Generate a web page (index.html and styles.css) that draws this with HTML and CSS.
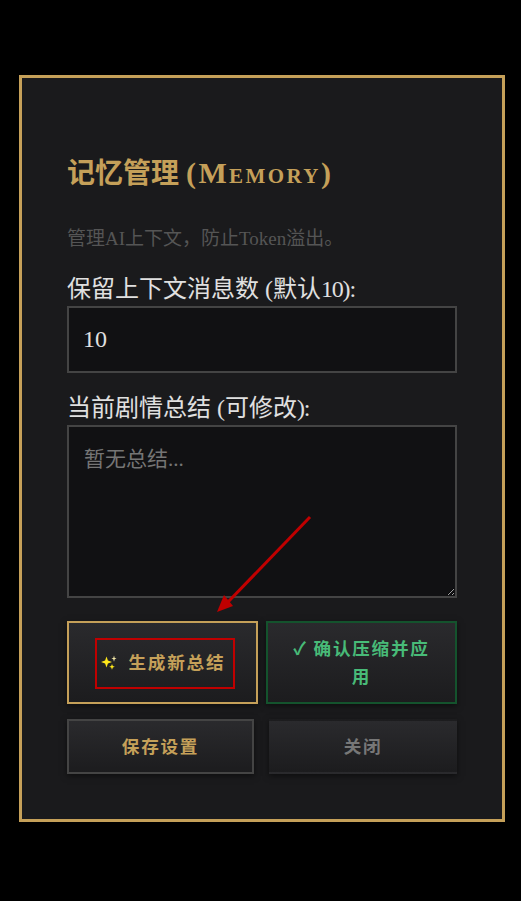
FILE: index.html
```html
<!DOCTYPE html>
<html lang="zh">
<head>
    <meta charset="UTF-8">
    <title>记忆管理</title>
    <link rel="stylesheet" href="styles.css">
</head>
<body>
    <div class="modal">
        <h2 class="modal-title">记忆管理 <span class="title-latin">(Memory)</span></h2>
        <p class="modal-desc">管理AI上下文，防止Token溢出。</p>

        <label class="field-label" for="keep">保留上下文消息数 (默认<span class="tight">10):</span></label>
        <input class="field-input" id="keep" type="text" value="10">

        <label class="field-label summary-label" for="summary">当前剧情总结 (可修改<span class="tight">):</span></label>
        <textarea class="field-area" id="summary" placeholder="暂无总结..."></textarea>

        <div class="btn-row first-row">
            <button class="btn btn-gold">
                <svg class="sparkle" width="18" height="18" viewBox="0 0 18 18">
                    <path d="M6.5 3.5 L7.9 7.6 L12 9 L7.9 10.4 L6.5 14.5 L5.1 10.4 L1 9 L5.1 7.6 Z" fill="#ffe81a"/>
                    <path d="M14 2.5 L14.7 4.9 L16.6 5.6 L14.7 6.3 L14 8.7 L13.3 6.3 L11.4 5.6 L13.3 4.9 Z" fill="#f3e7a8"/>
                    <path d="M12 11 L12.8 13 L14.8 13.8 L12.8 14.6 L12 16.8 L11.2 14.6 L9.2 13.8 L11.2 13 Z" fill="#ffe81a"/>
                </svg>
                生成新总结
            </button>
            <button class="btn btn-green">✓ 确认压缩并应用</button>
        </div>
        <div class="btn-row second-row">
            <button class="btn btn-save">保存设置</button>
            <button class="btn btn-close">关闭</button>
        </div>
    </div>

    <!-- annotation drawn over the page -->
    <div class="note-box"></div>
    <svg class="note-arrow" width="521" height="901" viewBox="0 0 521 901">
        <line x1="310" y1="517" x2="228" y2="602" stroke="#c00000" stroke-width="3"/>
        <polygon points="217,612 224,595 233,606" fill="#c00000"/>
    </svg>
</body>
</html>
```

FILE: styles.css
```css
html, body {
    margin: 0;
    height: 100%;
}
body {
    background: #000;
    font-family: "Liberation Serif", "Noto Sans CJK SC", serif;
    overflow: hidden;
}
.modal {
    box-sizing: border-box;
    width: 486px;
    height: 747px;
    margin: 75px 0 0 19px;
    padding: 75px 45px 0;
    background: #1a1a1c;
    border: 3px solid #c5a059;
}
.modal-title {
    margin: 0;
    font-size: 28px;
    line-height: 40px;
    font-weight: bold;
    color: #c5a059;
}
.title-latin {
    font-size: 30px;
    font-variant: small-caps;
    letter-spacing: 2.4px;
}
.modal-desc {
    margin: 31px 0 0;
    font-size: 19px;
    line-height: 28px;
    color: #555;
}
.field-label {
    display: block;
    margin-top: 19px;
    font-size: 24px;
    line-height: 34px;
    color: #e0e0e0;
}
.tight {
    letter-spacing: -1.2px;
}
.summary-label {
    margin-top: 18px;
}
.field-input,
.field-area {
    display: block;
    box-sizing: border-box;
    width: 100%;
    background: #111113;
    border: 2px solid #444;
    color: #e0e0e0;
    font-family: inherit;
    font-size: 24px;
    padding: 14px;
    outline: none;
    border-radius: 0;
}
.field-input {
    height: 67px;
}
.field-area {
    height: 173px;
    padding: 15px 15px;
    font-size: 21px;
}
.field-area::placeholder {
    color: #757575;
}
.btn-row {
    display: flex;
}
.first-row {
    gap: 8px;
    margin-top: 23px;
}
.second-row {
    gap: 15px;
    margin-top: 15px;
}
.btn {
    box-sizing: border-box;
    padding: 8px 20px 10px;
    background: linear-gradient(180deg, #2a2a2d, #1c1c1e);
    border: 2px solid #444;
    font-family: "Noto Sans CJK SC", sans-serif;
    font-size: 17.6px;
    font-weight: bold;
    line-height: 28px;
    letter-spacing: 1.76px;
    box-shadow: 0 2px 6px rgba(0, 0, 0, 0.5);
}
.first-row .btn {
    flex: 1;
    height: 83px;
}
.second-row .btn {
    height: 55px;
}
.btn-gold {
    border-color: #c5a059;
    color: #c5a059;
}
.sparkle {
    vertical-align: -2px;
    margin-right: 5px;
}
.btn-green {
    border-color: #14532d;
    color: #48bb78;
}
.btn-save {
    width: 187px;
    color: #c5a059;
}
.btn-close {
    flex: 1;
    border-color: transparent;
    color: #777;
}
.note-box {
    position: absolute;
    left: 95px;
    top: 638px;
    width: 140px;
    height: 51px;
    box-sizing: border-box;
    border: 2px solid #c00000;
}
.note-arrow {
    position: absolute;
    left: 0;
    top: 0;
    pointer-events: none;
}
```
